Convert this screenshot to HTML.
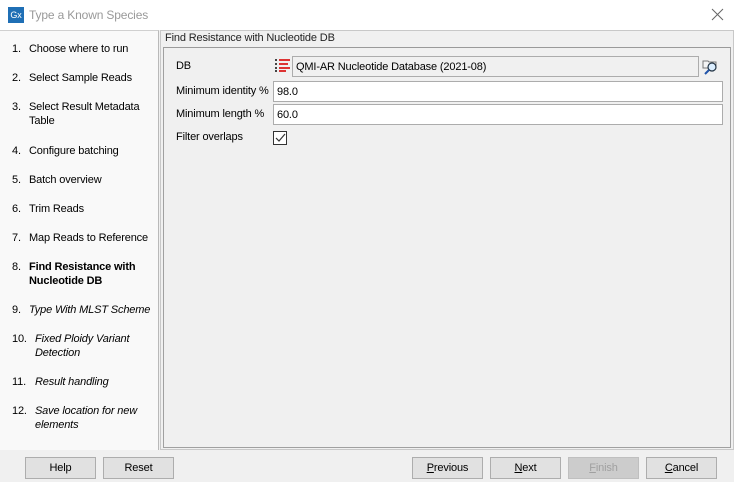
<!DOCTYPE html>
<html><head><meta charset="utf-8"><style>
*{box-sizing:border-box;margin:0;padding:0}
body{width:734px;height:482px;background:#f0f0f0;font-family:"Liberation Sans","DejaVu Sans",sans-serif;font-size:11px;letter-spacing:-0.15px;color:#000;position:relative;overflow:hidden}
.abs{position:absolute}
.title{left:0;top:0;width:734px;height:30px;background:#fff}
.left{left:0;top:30px;width:159px;height:420px;background:#f9f9f9;border-right:1px solid #b9b9b9;border-top:1px solid #d0d0d0}
.step{position:absolute;left:12px;line-height:14px}
.step .n{position:absolute;left:0}
.step .t{position:absolute;left:17px;width:135px}
.it .t{font-style:italic}
.b .t{font-weight:bold}
.box{left:163px;top:47px;width:568px;height:401px;border:1px solid #a0a0a0;border-top-color:#9a9a9a}
.outer{left:160px;top:30px;width:574px;height:420px;border:1px solid #c8c8c8}
.field{position:absolute;height:21px;border:1px solid #acacac;background:#fff;padding-left:3px;line-height:20px}
.btn{position:absolute;top:457px;width:71px;height:22px;border:1px solid #adadad;background:#e1e1e1;text-align:center;line-height:20px}
.lbl{position:absolute;left:176px}
</style></head><body>
<div class="abs title">
  <div class="abs" style="left:8px;top:7px;width:16px;height:16px;background:#1f6fb5;color:#fff;font-size:9px;line-height:16px;text-align:center">Gx</div>
  <div class="abs" style="left:29px;top:8px;font-size:12px;color:#999">Type a Known Species</div>
  <svg class="abs" style="left:711px;top:8px" width="13" height="13"><path d="M1 1L12 12M12 1L1 12" stroke="#666" stroke-width="1"/></svg>
</div>
<div class="abs left">
  <div class="step" style="top:11px"><span class="n">1.</span><span class="t">Choose where to run</span></div>
  <div class="step" style="top:40px"><span class="n">2.</span><span class="t">Select Sample Reads</span></div>
  <div class="step" style="top:69px"><span class="n">3.</span><span class="t">Select Result Metadata Table</span></div>
  <div class="step" style="top:113px"><span class="n">4.</span><span class="t">Configure batching</span></div>
  <div class="step" style="top:142px"><span class="n">5.</span><span class="t">Batch overview</span></div>
  <div class="step" style="top:171px"><span class="n">6.</span><span class="t">Trim Reads</span></div>
  <div class="step" style="top:200px"><span class="n">7.</span><span class="t">Map Reads to Reference</span></div>
  <div class="step b" style="top:229px"><span class="n">8.</span><span class="t">Find Resistance with Nucleotide DB</span></div>
  <div class="step it" style="top:272px"><span class="n">9.</span><span class="t">Type With MLST Scheme</span></div>
  <div class="step it" style="top:301px"><span class="n">10.</span><span class="t" style="left:23px">Fixed Ploidy Variant Detection</span></div>
  <div class="step it" style="top:344px"><span class="n">11.</span><span class="t" style="left:23px">Result handling</span></div>
  <div class="step it" style="top:373px"><span class="n">12.</span><span class="t" style="left:23px;width:115px">Save location for new elements</span></div>
</div>
<div class="abs outer"></div>
<div class="abs" style="left:165px;top:32px;color:#222">Find Resistance with Nucleotide DB</div>
<div class="abs box"></div>
<div class="lbl" style="top:60px">DB</div>
<svg class="abs" style="left:275px;top:59px" width="16" height="13">
<g fill="#444"><rect x="0" y="0" width="2" height="2"/><rect x="0" y="4" width="2" height="2"/><rect x="0" y="8" width="2" height="2"/><rect x="0" y="11" width="2" height="2"/></g>
<g fill="#d33"><rect x="4" y="0" width="11" height="2"/><rect x="4" y="4" width="9" height="2"/><rect x="4" y="8" width="11" height="2"/><rect x="4" y="11" width="7" height="2"/></g></svg>
<div class="field" style="left:292px;top:56px;width:407px;background:#f0f0f0">QMI-AR Nucleotide Database (2021-08)</div>
<svg class="abs" style="left:702px;top:57px" width="18" height="18">
<path d="M1 4h5l1 1h7v6H1z" fill="#f4f4f4" stroke="#777"/>
<circle cx="10" cy="10" r="4" fill="#dbeeff" stroke="#234" stroke-width="1.2"/><path d="M7 13L3 17" stroke="#2255aa" stroke-width="2"/></svg>
<div class="lbl" style="top:85px">Minimum identity %</div>
<div class="field" style="left:273px;top:81px;width:450px">98.0</div>
<div class="lbl" style="top:108px">Minimum length %</div>
<div class="field" style="left:273px;top:104px;width:450px">60.0</div>
<div class="lbl" style="top:131px">Filter overlaps</div>
<div class="abs" style="left:273px;top:131px;width:14px;height:14px;border:1px solid #333;background:#fff"></div>
<svg class="abs" style="left:275px;top:133px" width="11" height="10"><path d="M1 5L4 8L10 1" stroke="#333" stroke-width="1.2" fill="none"/></svg>
<div class="btn" style="left:25px">Help</div>
<div class="btn" style="left:103px">Reset</div>
<div class="btn" style="left:412px"><u>P</u>revious</div>
<div class="btn" style="left:490px"><u>N</u>ext</div>
<div class="btn" style="left:568px;color:#a0a0a0;border-color:#bfbfbf;background:#cccccc"><u>F</u>inish</div>
<div class="btn" style="left:646px"><u>C</u>ancel</div>
</body></html>
